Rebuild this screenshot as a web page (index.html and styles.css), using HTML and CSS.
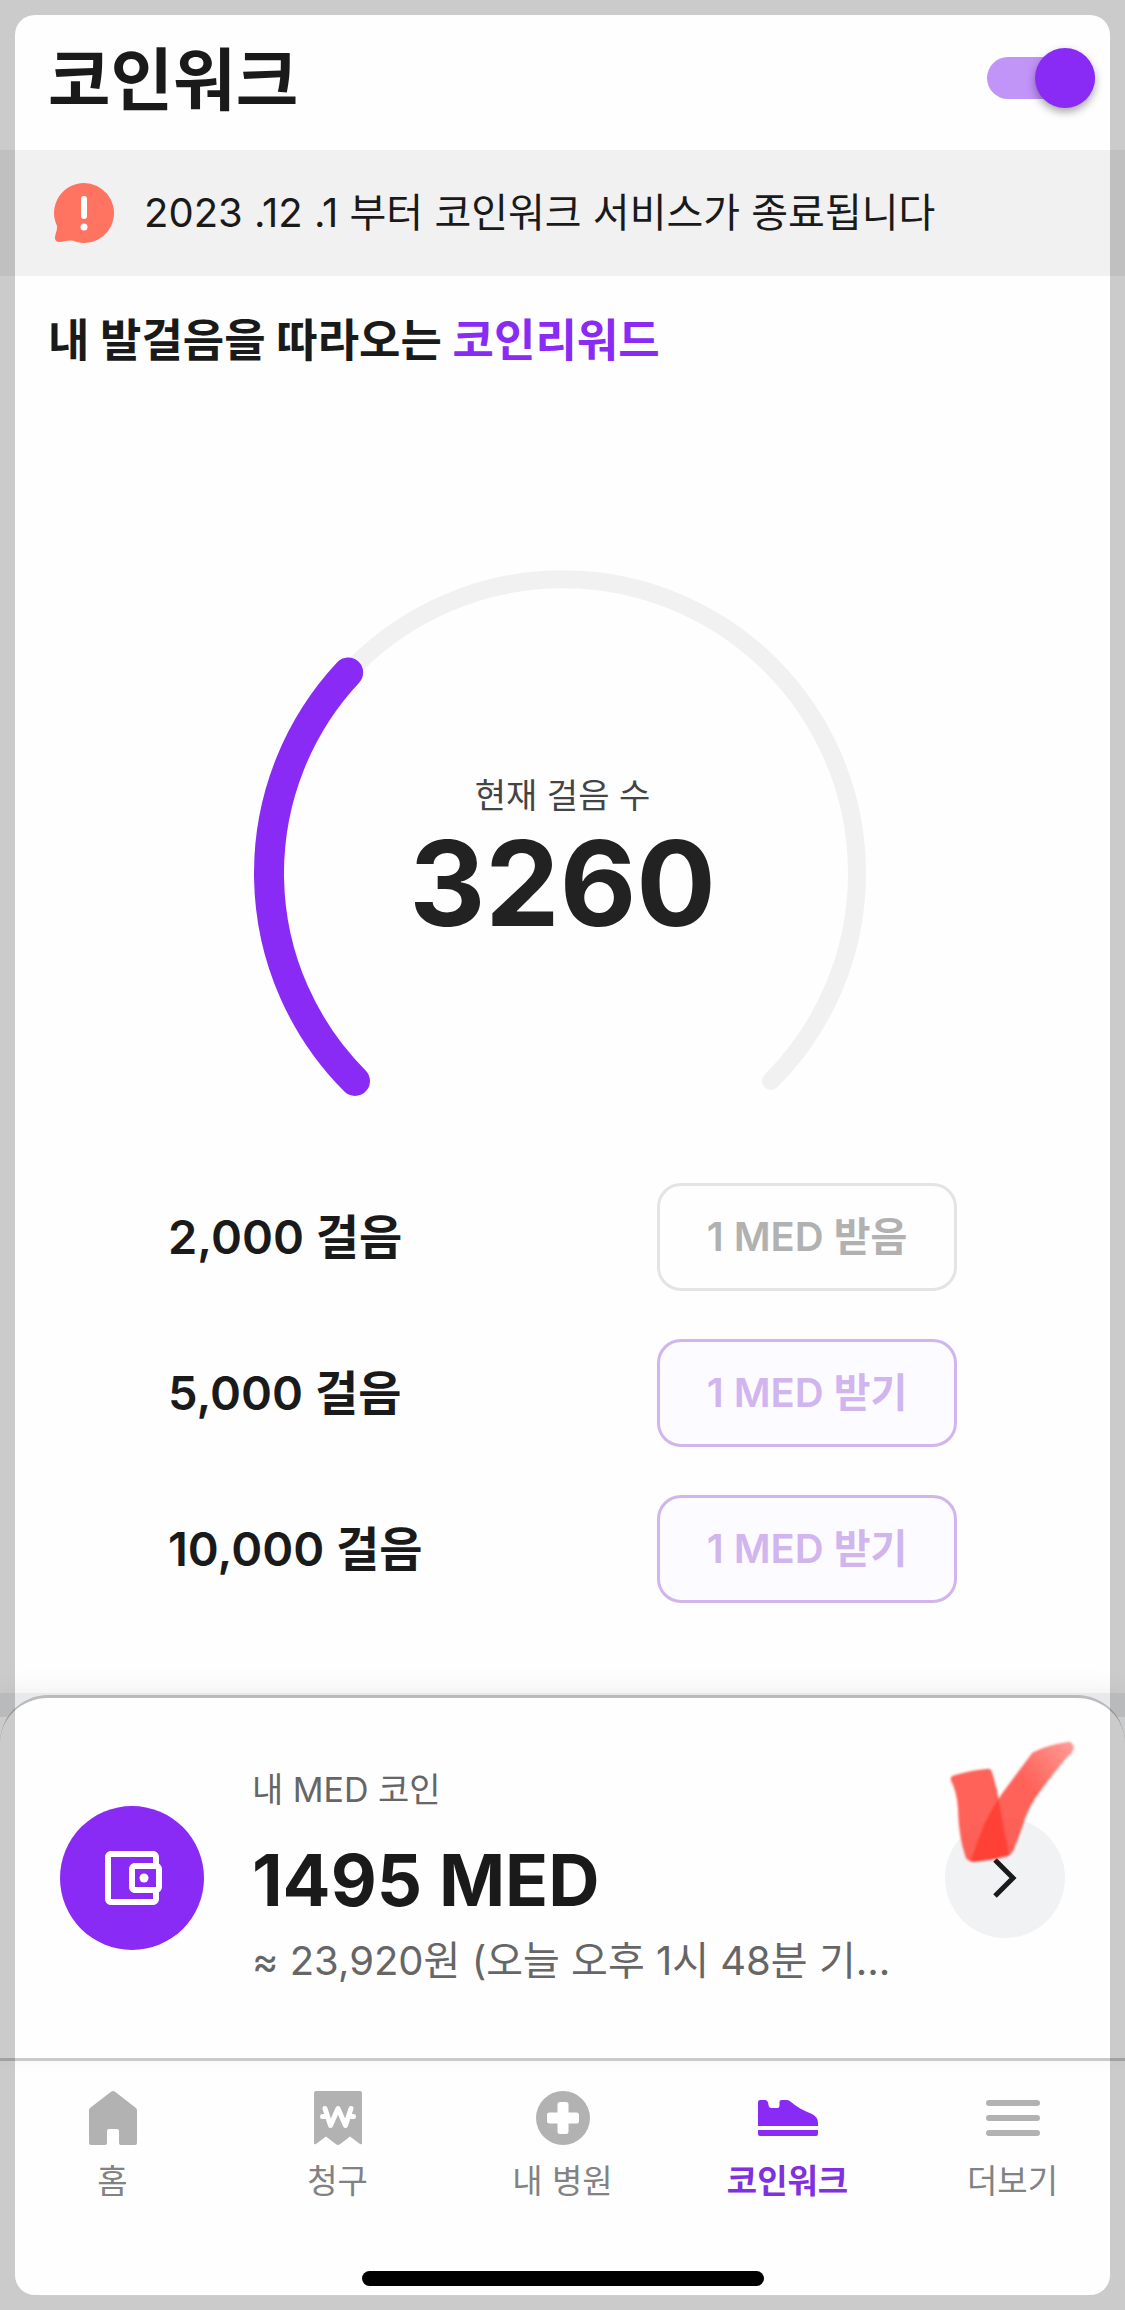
FILE: index.html
```html
<!DOCTYPE html>
<html lang="ko">
<head>
    <meta charset="UTF-8">
    <meta name="viewport" content="width=device-width, initial-scale=1.0">
    <title>코인워크</title>
    <link rel="stylesheet" href="styles.css">
</head>
<body>
    <!-- Header Section -->
    <header class="header">
        <h1>코인워크</h1>
        <input type="checkbox" class="switch" aria-label="코인워크 사용" checked>
    </header>

    <!-- Service notice -->
    <div class="notice" role="status">
        <svg class="notice-icon" viewBox="0 0 60 60" aria-hidden="true">
            <path fill="#ff7461" d="M30 0a30 30 0 1 1-12 57.500C13 57 9 59 5 59c-3 0-4.500-2-4-5C1.500 50 3.500 47 3 43A30 30 0 0 1 30 0z"/>
            <path stroke="#fff" stroke-width="6" stroke-linecap="round" d="M30 16v17"/>
            <circle cx="30" cy="44" r="3.500" fill="#fff"/>
        </svg>
        <p>2023 .12 .1 부터 코인워크 서비스가 종료됩니다</p>
    </div>

    <main class="main">
        <h2>내 발걸음을 따라오는 <span class="accent">코인리워드</span></h2>

        <!-- Step gauge -->
        <div class="gauge">
            <svg viewBox="0 0 618 532" aria-hidden="true">
                <path class="gauge-track" d="M101 517A294 294 0 1 1 517 517"/>
                <path class="gauge-value" pathLength="10000" stroke-dasharray="3260 20000" d="M101 517A294 294 0 1 1 517 517"/>
            </svg>
            <div class="gauge-text">
                <p class="gauge-label">현재 걸음 수</p>
                <p class="gauge-count">3260</p>
            </div>
        </div>

        <!-- Rewards -->
        <ul class="rewards">
            <li>
                <span>2,000 걸음</span>
                <button class="reward-button received" disabled>1 MED 받음</button>
            </li>
            <li>
                <span>5,000 걸음</span>
                <button class="reward-button" disabled>1 MED 받기</button>
            </li>
            <li>
                <span>10,000 걸음</span>
                <button class="reward-button" disabled>1 MED 받기</button>
            </li>
        </ul>
    </main>

    <!-- Wallet sheet -->
    <div class="sheet">
        <section class="wallet">
            <div class="wallet-icon">
                <svg viewBox="0 0 24 24" aria-hidden="true">
                    <path d="M21 7.280V5c0-1.100-.9-2-2-2H5c-1.110 0-2 .9-2 2v14c0 1.100.89 2 2 2h14c1.100 0 2-.9 2-2v-2.280c.59-.35 1-.98 1-1.720V9c0-.74-.41-1.370-1-1.720zM20 9v6h-7V9h7zM5 19V5h14v2h-6c-1.100 0-2 .9-2 2v6c0 1.100.9 2 2 2h6v2H5z"/>
                    <circle cx="16" cy="12" r="1.500"/>
                </svg>
            </div>
            <div class="wallet-text">
                <p class="wallet-label">내 MED 코인</p>
                <p class="wallet-amount">1495 MED</p>
                <p class="wallet-rate">≈ 23,920원 (오늘 오후 1시 48분 기...</p>
            </div>
            <button class="wallet-more" aria-label="내 MED 코인 보기">
                <svg class="chevron" viewBox="0 0 24 40" aria-hidden="true">
                    <path d="M2 2l18 18L2 38"/>
                </svg>
                <!-- Red marker check -->
                <svg class="marker" viewBox="0 0 390 390" aria-hidden="true">
                    <defs>
                        <linearGradient id="markerFade" x1="0" y1="1" x2="1" y2="0">
                            <stop offset="0.6" stop-color="#ff3b30" stop-opacity="0.8"/>
                            <stop offset="1" stop-color="#ff3b30" stop-opacity="0.5"/>
                        </linearGradient>
                        <filter id="markerSoft">
                            <feGaussianBlur stdDeviation="3"/>
                        </filter>
                    </defs>
                    <g filter="url(#markerSoft)">
                        <path fill="#ff3b30" fill-opacity="0.8" d="M17 143Q16 133 28 130Q80 114 130 110Q138 110 140 118Q158 170 164 220Q176 290 192 366Q140 384 90 390Q68 390 62 376Q40 310 39 230Q36 180 17 143z"/>
                        <path fill="url(#markerFade)" d="M76 388Q96 330 118 276Q150 210 188 162Q228 108 262 62Q300 40 372 29Q388 34 386 52Q380 66 362 80Q322 128 290 172Q256 216 240 260Q224 310 206 354Q196 374 178 376Q130 388 76 388z"/>
                    </g>
                </svg>
            </button>
        </section>
    </div>

    <!-- Bottom navigation -->
    <nav class="bottom-nav">
        <a href="#home">
            <svg viewBox="0 0 72 72" aria-hidden="true">
                <path d="M34 9.800q2-1.600 4 0L59 26q1 1 1 2.500V61q0 2-2 2H44q-2 0-2-2V49q0-2-2-2h-8q-2 0-2 2v12q0 2-2 2H14q-2 0-2-2V28.500Q12 27 13 26z"/>
            </svg>
            홈
        </a>
        <a href="#claim">
            <svg viewBox="0 0 72 72" aria-hidden="true">
                <path d="M14 9h44q2 0 2 2v50q0 2-2 1L48 54.500 38 62.200q-2 1.600-4 0L24 54.500 14 62q-2 1-2-1V11q0-2 2-2z"/>
                <path class="won" d="M23 26.500l5.500 17L36 26.500l7.500 17L49 26.500M20.500 34.500h5M46.500 34.500h5"/>
            </svg>
            청구
        </a>
        <a href="#hospital">
            <svg viewBox="0 0 72 72" aria-hidden="true">
                <circle cx="36" cy="36" r="27"/>
                <path fill="#fff" d="M33 20h6q2.500 0 2.500 2.500v8h8q2.500 0 2.500 2.500v6q0 2.500-2.500 2.500h-8v8Q41.500 52 39 52h-6q-2.500 0-2.500-2.500v-8h-8Q20 41.500 20 39v-6q0-2.500 2.500-2.500h8v-8Q30.500 20 33 20z"/>
            </svg>
            내 병원
        </a>
        <a href="#coinwalk" class="active" aria-current="page">
            <svg viewBox="0 0 72 72" aria-hidden="true">
                <path d="M6 20q0-2 2-2h5q3 0 3.500 5 .5 3 3 3h6q2 0 2-2.500V20q0-2 2-2h5q2 0 3.500 1.200C45 25 52 29 60 32q6 3 6 9v3H6z"/>
                <path d="M6 48h60v4q0 2-2 2H8q-2 0-2-2z"/>
            </svg>
            코인워크
        </a>
        <a href="#more">
            <svg viewBox="0 0 72 72" aria-hidden="true">
                <rect x="9" y="18" width="54" height="6" rx="3"/>
                <rect x="9" y="33" width="54" height="6" rx="3"/>
                <rect x="9" y="48" width="54" height="6" rx="3"/>
            </svg>
            더보기
        </a>
    </nav>
    <div class="home-bar"></div>

    <!-- Dimmed edge around the screen -->
    <div class="frame"></div>
</body>
</html>
```

FILE: styles.css
```css
* {
    box-sizing: border-box;
}

body {
    font-family: Inter, "Noto Sans CJK KR", sans-serif;
    background-color: #fefefe;
    color: #1a1a1a;
    margin: 0;
    min-height: 100vh;
    display: flex;
    flex-direction: column;
}

h1, h2, p, ul {
    margin: 0;
    padding: 0;
}

svg {
    display: block;
}

/* Header */
.header {
    display: flex;
    align-items: center;
    justify-content: space-between;
    height: 150px;
    padding: 6px 30px 0 48px;
}

.header h1 {
    padding-top: 3px;
    font-size: 68px;
    line-height: 90px;
    font-weight: 700;
}

.switch {
    appearance: none;
    position: relative;
    width: 108px;
    height: 42px;
    margin: 0;
    border-radius: 21px;
    background: #c194f8;
    cursor: pointer;
}

.switch::after {
    content: "";
    position: absolute;
    top: -9px;
    right: 0;
    width: 60px;
    height: 60px;
    border-radius: 50%;
    background: #892bf5;
    box-shadow: 0 4px 8px rgba(0, 0, 0, 0.35);
}

/* Notice */
.notice {
    display: flex;
    align-items: center;
    gap: 30px;
    height: 126px;
    padding: 0 54px;
    background: #f1f1f1;
}

.notice-icon {
    width: 60px;
    height: 60px;
    flex-shrink: 0;
}

.notice p {
    font-size: 40px;
    line-height: 60px;
}

/* Main */
.main h2 {
    padding: 38px 48px 0;
    font-size: 45px;
    line-height: 54px;
    font-weight: 700;
}

.accent {
    color: #892bf5;
}

.gauge {
    position: relative;
    width: 618px;
    margin: 196px auto 0;
}

.gauge path {
    fill: none;
    stroke-linecap: round;
}

.gauge-track {
    stroke: #f1f1f1;
    stroke-width: 18;
}

.gauge-value {
    stroke: #892bf5;
    stroke-width: 30;
}

.gauge-text {
    position: absolute;
    top: 208px;
    left: 0;
    right: 0;
    text-align: center;
}

.gauge-label {
    font-size: 34px;
    line-height: 48px;
    color: #444;
}

.gauge-count {
    font-size: 118px;
    line-height: 126px;
    font-weight: 700;
    color: #222;
}

.rewards {
    list-style: none;
    display: flex;
    flex-direction: column;
    gap: 48px;
    padding: 87px 168px 0;
}

.rewards li {
    display: flex;
    align-items: center;
    justify-content: space-between;
    font-size: 47px;
    line-height: 60px;
    font-weight: 600;
}

.reward-button {
    width: 300px;
    height: 108px;
    padding: 0 0 6px;
    border: 3px solid #d0b5ee;
    border-radius: 24px;
    background: #fcfbff;
    color: #d0b5ee;
    font-family: inherit;
    font-size: 40px;
    font-weight: 600;
}

.received {
    border-color: #e4e4e4;
    background: #fefefe;
    color: #b1b1b1;
}

/* Wallet sheet */
.sheet {
    margin-top: auto;
    padding-top: 2px;
    background: linear-gradient(#e8e9ec 24px, #fefefe 24px);
    box-shadow: 0 -4px 24px rgba(0, 0, 0, 0.06);
}

.wallet {
    display: flex;
    align-items: center;
    height: 363px;
    padding: 0 60px;
    border-top: 3px solid #bbb;
    border-radius: 48px 48px 0 0;
    background: #fefefe;
}

.wallet-icon {
    display: flex;
    align-items: center;
    justify-content: center;
    width: 144px;
    height: 144px;
    flex-shrink: 0;
    border-radius: 50%;
    background: #892bf5;
}

.wallet-icon svg {
    width: 72px;
    height: 72px;
    fill: #fff;
}

.wallet-text {
    flex: 1;
    min-width: 0;
    margin-left: 48px;
    white-space: nowrap;
}

.wallet-label {
    font-size: 34px;
    line-height: 54px;
    color: #666;
}

.wallet-amount {
    margin-top: 15px;
    font-size: 71px;
    line-height: 96px;
    font-weight: 700;
}

.wallet-rate {
    font-size: 40px;
    line-height: 66px;
    color: #666;
}

.wallet-more {
    position: relative;
    width: 120px;
    height: 120px;
    flex-shrink: 0;
    padding: 0;
    border: none;
    border-radius: 50%;
    background: #f1f2f4;
    cursor: pointer;
}

.chevron {
    width: 24px;
    height: 40px;
    margin: 0 auto;
    fill: none;
    stroke: #1a1a1a;
    stroke-width: 5;
}

.marker {
    position: absolute;
    top: -86px;
    left: 0;
    width: 130px;
    height: 130px;
    overflow: visible;
}

/* Bottom navigation */
.bottom-nav {
    display: grid;
    grid-template-columns: repeat(5, 1fr);
    padding-top: 21px;
    border-top: 3px solid #cacaca;
}

.bottom-nav a {
    display: flex;
    flex-direction: column;
    align-items: center;
    color: #828282;
    font-size: 33px;
    line-height: 54px;
    text-decoration: none;
}

.bottom-nav svg {
    width: 72px;
    height: 72px;
    fill: #b2b2b2;
}

.bottom-nav .won {
    fill: none;
    stroke: #fff;
    stroke-width: 5;
    stroke-linecap: round;
    stroke-linejoin: round;
}

.bottom-nav .active {
    color: #8030dd;
    font-weight: 700;
}

.bottom-nav .active svg {
    fill: #892bf5;
}

.home-bar {
    width: 402px;
    height: 15px;
    margin: 63px auto 24px;
    border-radius: 8px;
    background: #000;
}

.frame {
    position: fixed;
    inset: 15px;
    border-radius: 20px;
    box-shadow: 0 0 0 40px rgba(0, 0, 0, 0.2);
    pointer-events: none;
}
```
